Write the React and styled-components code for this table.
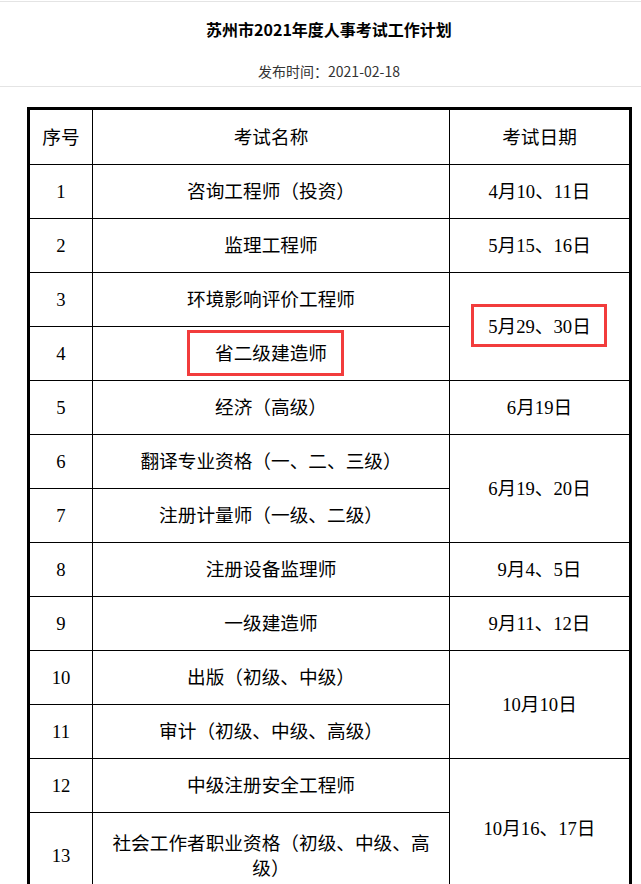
import React from "react";
import styled, { createGlobalStyle } from "styled-components";

const GlobalStyle = createGlobalStyle`
  html, body {
    margin: 0;
    padding: 0;
    background: #fff;
  }
  body {
    font-family: "Noto Sans CJK SC", sans-serif;
  }
`;

const Header = styled.div`
  margin-top: 1px;
  border-top: 1px solid #e4e4e4;
  border-bottom: 1px solid #e4e4e4;
  padding: 16px 0 5px;
`;

const HeaderInner = styled.div`
  margin-left: 27px;
  width: 604px;
  text-align: center;
`;

const Title = styled.h1`
  margin: 0;
  font-size: 16px;
  line-height: 22px;
  font-weight: bold;
  color: #000;
`;

const PubDate = styled.div`
  margin-top: 21px;
  font-size: 14px;
  line-height: 20px;
  color: #333;
`;

const TableWrap = styled.div`
  position: relative;
  margin: 20px 0 0 27px;
  width: 605px;
`;

const Table = styled.table`
  width: 100%;
  border-collapse: collapse;
  table-layout: fixed;
  border: 3px solid #000;
  font-family: "Liberation Serif", "Noto Sans CJK SC", serif;
  font-size: 18.67px;
  color: #000;
`;

const Cell = styled.td`
  border: 1px solid #000;
  text-align: center;
  vertical-align: middle;
  font-weight: normal;
  height: ${(p) => (p.$head ? 54 : 53)}px;
  padding: ${(p) => (p.$tall ? "16px 12px" : "0 10px")};
  line-height: 25px;
`;

const Highlight = styled.div`
  position: absolute;
  box-sizing: border-box;
  border: 3px solid #f23c3c;
  pointer-events: none;
`;

const rows = [
  { no: "1", name: "咨询工程师（投资）", date: "4月10、11日" },
  { no: "2", name: "监理工程师", date: "5月15、16日" },
  { no: "3", name: "环境影响评价工程师", date: "5月29、30日", span: 2 },
  { no: "4", name: "省二级建造师" },
  { no: "5", name: "经济（高级）", date: "6月19日" },
  { no: "6", name: "翻译专业资格（一、二、三级）", date: "6月19、20日", span: 2 },
  { no: "7", name: "注册计量师（一级、二级）" },
  { no: "8", name: "注册设备监理师", date: "9月4、5日" },
  { no: "9", name: "一级建造师", date: "9月11、12日" },
  { no: "10", name: "出版（初级、中级）", date: "10月10日", span: 2 },
  { no: "11", name: "审计（初级、中级、高级）" },
  { no: "12", name: "中级注册安全工程师", date: "10月16、17日", span: 2 },
  { no: "13", name: "社会工作者职业资格（初级、中级、高级）", tall: true },
];

const App = () => {
  return (
    <>
      <GlobalStyle />
      <Header>
        <HeaderInner>
          <Title>苏州市2021年度人事考试工作计划</Title>
          <PubDate>发布时间：2021-02-18</PubDate>
        </HeaderInner>
      </Header>
      <TableWrap>
        <Table>
          <colgroup>
            <col style={{ width: 64 }} />
            <col style={{ width: 357 }} />
            <col />
          </colgroup>
          <thead>
            <tr>
              <Cell as="th" $head>序号</Cell>
              <Cell as="th" $head>考试名称</Cell>
              <Cell as="th" $head>考试日期</Cell>
            </tr>
          </thead>
          <tbody>
            {rows.map((r) => (
              <tr key={r.no}>
                <Cell>{r.no}</Cell>
                <Cell $tall={r.tall}>{r.name}</Cell>
                {r.date && <Cell rowSpan={r.span || 1}>{r.date}</Cell>}
              </tr>
            ))}
          </tbody>
        </Table>
        <Highlight style={{ left: 160, top: 223, width: 157, height: 46 }} />
        <Highlight style={{ left: 444, top: 197, width: 136, height: 43 }} />
      </TableWrap>
    </>
  );
};

export default App;
